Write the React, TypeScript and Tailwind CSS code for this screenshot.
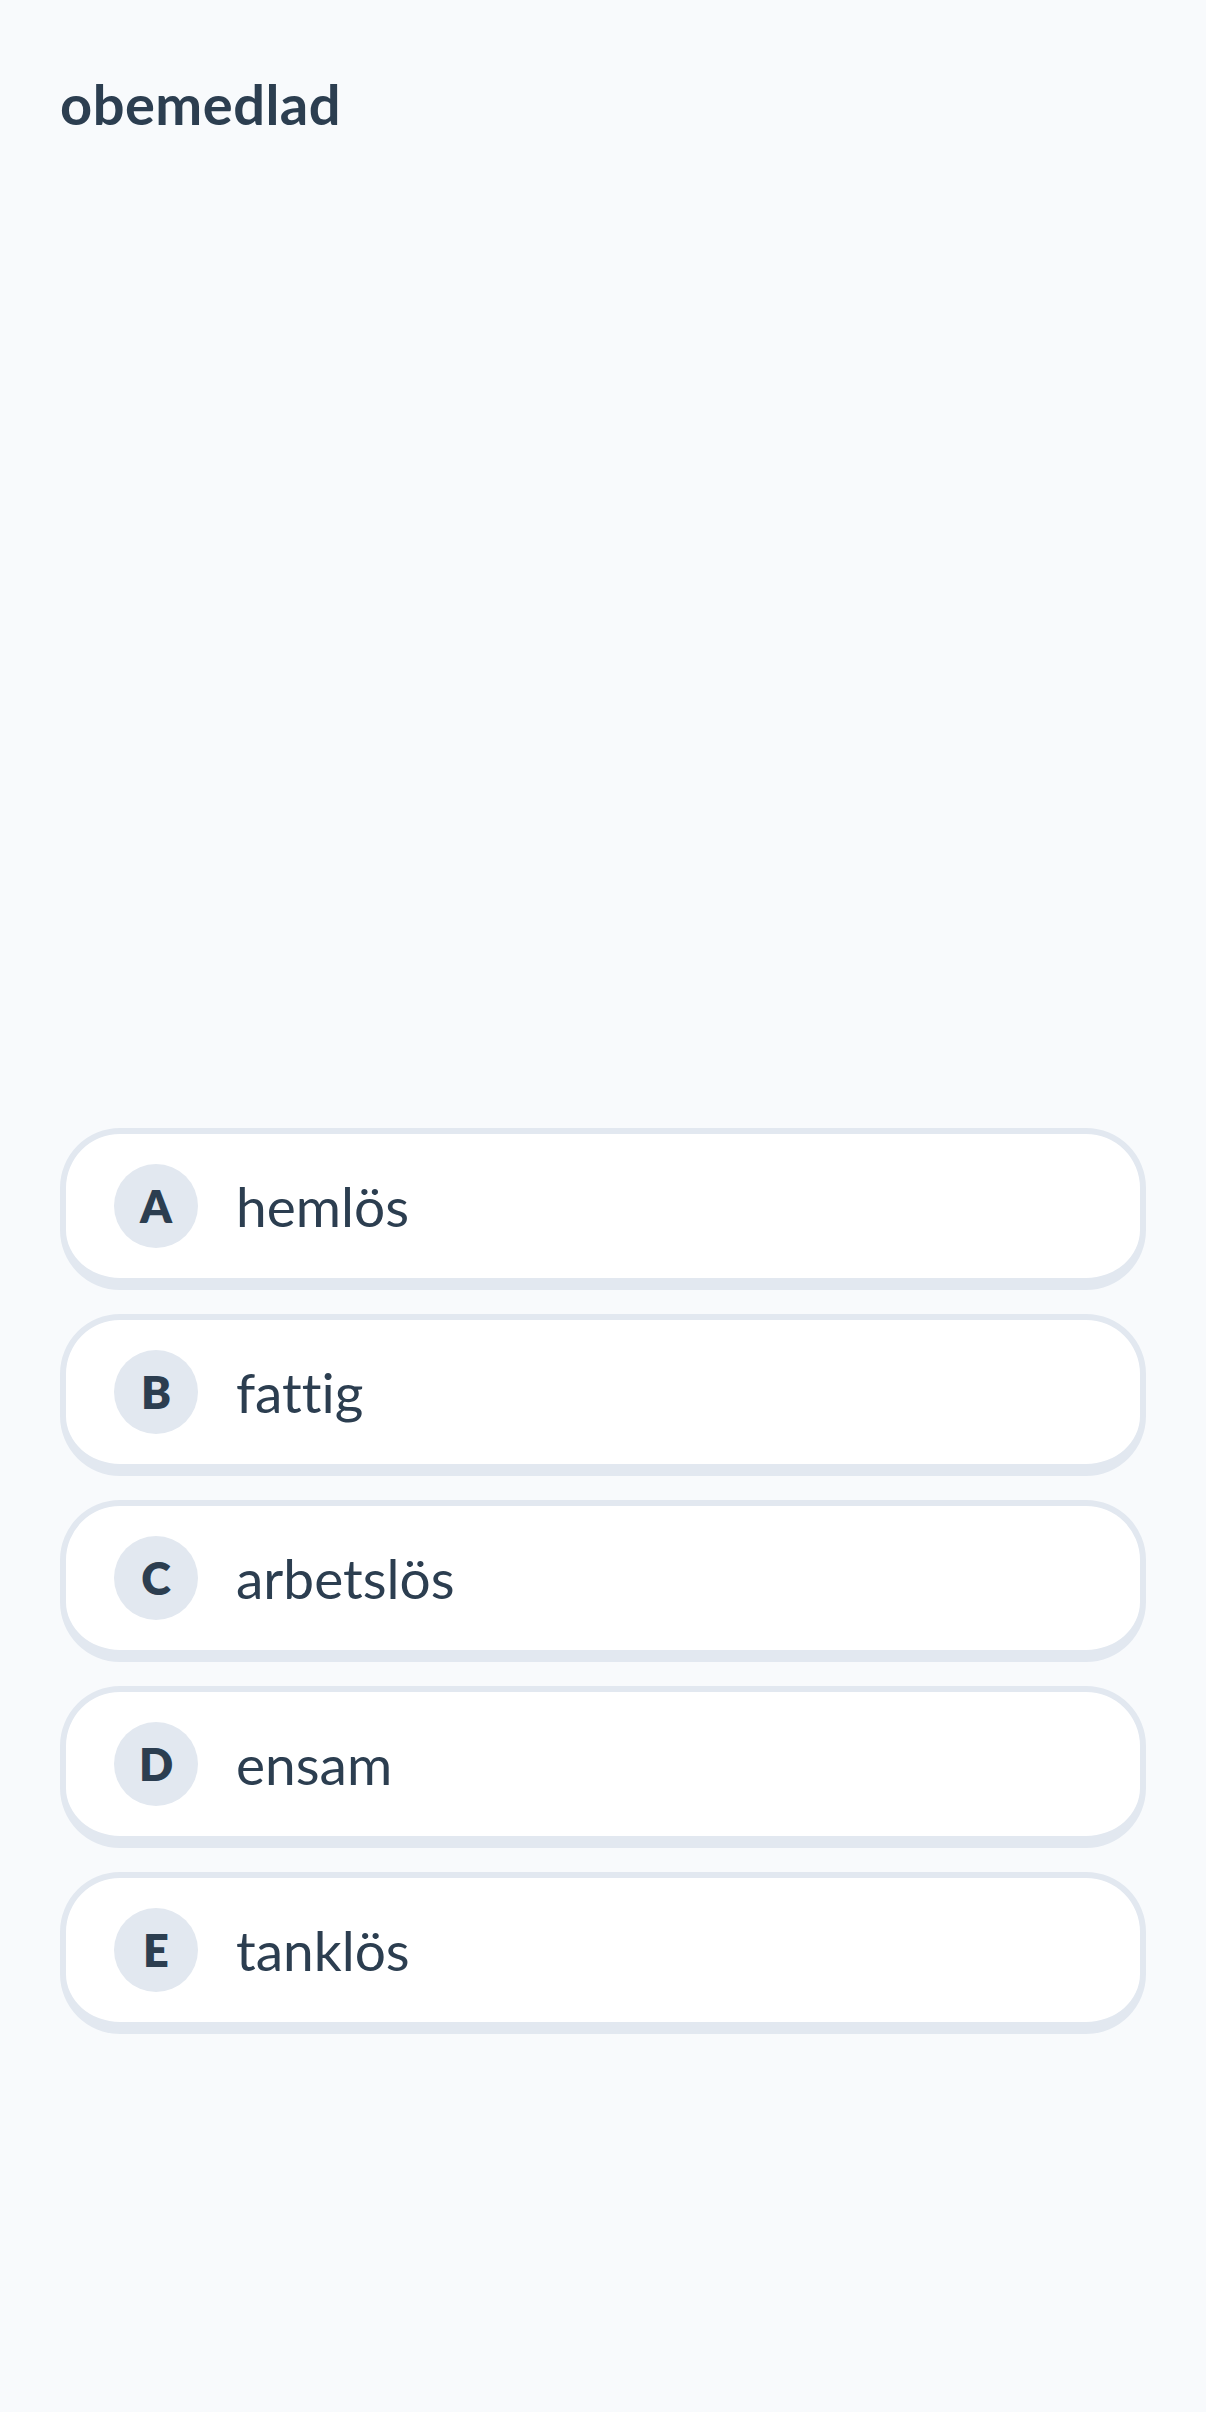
import React from "react";

const options = [
  { letter: "A", text: "hemlös" },
  { letter: "B", text: "fattig" },
  { letter: "C", text: "arbetslös" },
  { letter: "D", text: "ensam" },
  { letter: "E", text: "tanklös" },
];

export default function App() {
  return (
    <div
      className="min-h-[2412px] w-full bg-[#f8fafc] px-[60px] text-[#2c3e50] [font-variant-ligatures:none]"
      style={{ fontFamily: "Lato, 'Noto Sans', sans-serif" }}
    >
      <h1 className="pt-[76px] text-[56px] font-bold leading-[56px] tracking-[0.5px]">obemedlad</h1>
      <div className="mt-[996px] flex flex-col gap-[24px]">
        {options.map((o) => (
          <button
            key={o.letter}
            className="flex h-[162px] w-full items-center rounded-[60px] border-[6px] border-b-[12px] border-[#e2e8f0] bg-white px-[48px] text-left"
          >
            <span className="flex h-[84px] w-[84px] shrink-0 items-center justify-center rounded-full bg-[#e2e8f0] text-[45px] font-extrabold leading-none">
              {o.letter}
            </span>
            <span className="ml-[38px] text-[55px] leading-none">{o.text}</span>
          </button>
        ))}
      </div>
    </div>
  );
}
